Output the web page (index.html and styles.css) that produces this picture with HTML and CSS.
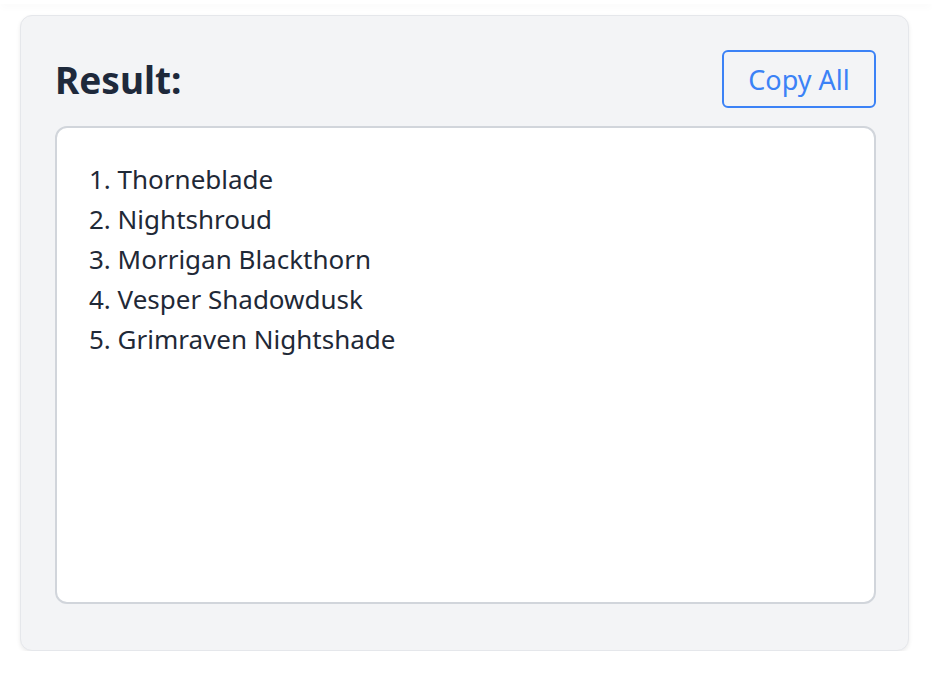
FILE: index.html
```html
<!DOCTYPE html>
<html lang="en">

<head>
  <meta charset="UTF-8">
  <meta name="viewport" content="width=device-width, initial-scale=1.0">
  <title>Result</title>
  <link rel="stylesheet" href="styles.css">
</head>

<body>
<div class="top-strip"></div>

<div id="result-card">
  <div class="result-header">
    <h2>Result:</h2>
    <button id="copy-button">Copy All</button>
  </div>

  <div id="result-box">
    <div>1. Thorneblade</div>
    <div>2. Nightshroud</div>
    <div>3. Morrigan Blackthorn</div>
    <div>4. Vesper Shadowdusk</div>
    <div>5. Grimraven Nightshade</div>
  </div>
</div>
</body>

</html>
```

FILE: styles.css
```css
body {
  font-family: "Noto Sans", Arial, sans-serif;
  margin: 0;
  padding: 0;
  background-color: #ffffff;
  color: #1f2937;
}

.top-strip {
  height: 4px;
  box-shadow: 0 2px 8px rgba(0, 0, 0, 0.04);
}

#result-card {
  margin: 11px 0 0 20px;
  width: 889px;
  height: 636px;
  box-sizing: border-box;
  padding: 34px 32px 0 34px;
  background-color: #f3f4f6;
  border: 1px solid #e5e7eb;
  border-radius: 12px;
  box-shadow: 0 2px 4px rgba(0, 0, 0, 0.08);
}

.result-header {
  display: flex;
  justify-content: space-between;
  align-items: center;
  margin-bottom: 18px;
}

h2 {
  margin: 0;
  font-size: 37px;
  font-weight: 700;
  color: #1e293b;
}

#copy-button {
  height: 58px;
  width: 154px;
  padding: 0;
  font-family: inherit;
  font-size: 27px;
  color: #3b82f6;
  background-color: transparent;
  border: 2px solid #3b82f6;
  border-radius: 6px;
  cursor: pointer;
}

#result-box {
  height: 478px;
  box-sizing: border-box;
  padding: 31px 32px;
  background-color: #ffffff;
  border: 2px solid #d1d5db;
  border-radius: 12px;
  font-size: 26px;
  line-height: 40px;
}
```
